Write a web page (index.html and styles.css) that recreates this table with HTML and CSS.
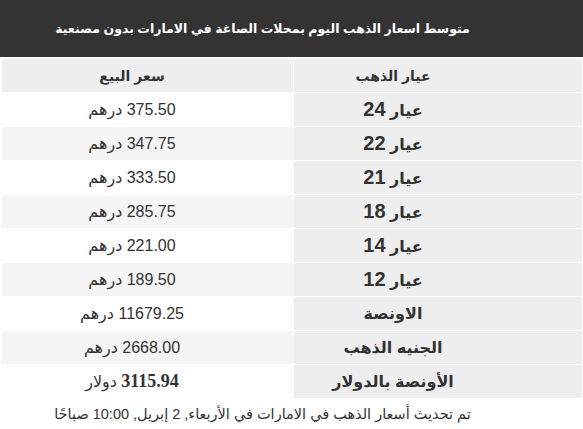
FILE: index.html
```html
<!DOCTYPE html>
<html lang="ar" dir="rtl">
<head>
<meta charset="utf-8">
<title>أسعار الذهب</title>
<link rel="stylesheet" href="styles.css">
</head>
<body>
<div class="title">متوسط اسعار الذهب اليوم بمحلات الصاغة في الامارات بدون مصنعية</div>
<table class="prices">
  <thead>
    <tr><th class="karat">عيار الذهب</th><th class="price">سعر البيع</th></tr>
  </thead>
  <tbody>
    <tr><td class="karat">عيار <span class="num">24</span></td><td class="price">375.50 درهم</td></tr>
    <tr><td class="karat">عيار <span class="num">22</span></td><td class="price">347.75 درهم</td></tr>
    <tr><td class="karat">عيار <span class="num">21</span></td><td class="price">333.50 درهم</td></tr>
    <tr><td class="karat">عيار <span class="num">18</span></td><td class="price">285.75 درهم</td></tr>
    <tr><td class="karat">عيار <span class="num">14</span></td><td class="price">221.00 درهم</td></tr>
    <tr><td class="karat">عيار <span class="num">12</span></td><td class="price">189.50 درهم</td></tr>
    <tr><td class="karat">الاونصة</td><td class="price">11679.25 درهم</td></tr>
    <tr><td class="karat">الجنيه الذهب</td><td class="price">2668.00 درهم</td></tr>
    <tr><td class="karat">الأونصة بالدولار</td><td class="price"><b class="usd">3115.94</b> دولار</td></tr>
  </tbody>
</table>
<p class="updated">تم تحديث أسعار الذهب في الامارات في الأربعاء, 2 إبريل, 10:00 صباحًا</p>
</body>
</html>
```
FILE: styles.css
```css
html, body {
  margin: 0;
  padding: 0;
  background: #fff;
}
body {
  font-family: "Liberation Sans", "DejaVu Sans", Arial, sans-serif;
  color: #333;
  font-size: 16px;
}
.title {
  background: #333;
  color: #fff;
  font-weight: bold;
  font-size: 12.5px;
  white-space: nowrap;
  height: 57px;
  display: flex;
  align-items: center;
  justify-content: center;
  padding-right: 58px;
  box-sizing: border-box;
}
.prices {
  margin: 1px 0 0 1px;
  width: calc(100% - 1px);
  border-collapse: separate;
  border-spacing: 1px;
  table-layout: fixed;
}
.prices th, .prices td {
  height: 33px;
  padding: 0;
  text-align: center;
  vertical-align: middle;
  box-sizing: border-box;
}
.prices th {
  background: #eee;
  font-weight: bold;
  font-size: 14px;
  color: #333;
}
.prices .karat {
  width: 288px;
  background: #eee;
  font-weight: bold;
  padding-right: 90px;
}
.prices .price {
  padding-right: 31px;
  background: #fff;
}
.prices th.price {
  background: #eee;
}
.prices tbody tr:nth-child(even) td.price {
  background: #f5f5f5;
}
.num {
  font-size: 20px;
  font-weight: bold;
}
.usd {
  font-family: "Liberation Serif", "Times New Roman", serif;
  font-size: 18px;
  font-weight: bold;
}
.updated {
  margin: 0;
  height: 30px;
  line-height: 30px;
  text-align: center;
  padding-right: 58px;
  font-size: 14.5px;
}
```
